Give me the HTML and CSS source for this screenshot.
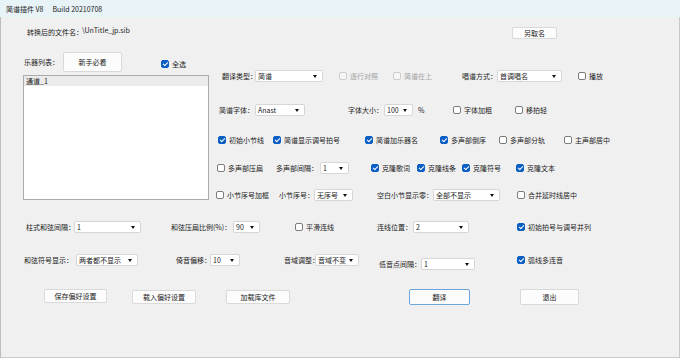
FILE: index.html
```html
<!DOCTYPE html>
<html lang="zh-CN">
<head>
    <meta charset="UTF-8">
    <meta name="viewport" content="width=device-width, initial-scale=1.0">
    <title>简谱插件 V8</title>
    <link rel="stylesheet" href="styles.css">
</head>
<body>
<div class="window">
    <div class="titlebar">
        <span>简谱插件 V8</span>
        <span class="build">Build 20210708</span>
    </div>

    <div class="client">
        <div class="file-row">
            <span class="file-label">转换后的文件名：</span>
            <span class="file-path">\UnTitle_jp.sib</span>
            <button class="btn btn-rename">另取名</button>
        </div>

        <div class="main">
            <div class="instruments">
                <div class="inst-head">
                    <span class="inst-label">乐器列表：</span>
                    <button class="btn btn-guide">新手必看</button>
                    <label class="check on select-all"><span class="box"></span>全选</label>
                </div>
                <ul class="inst-list">
                    <li class="active">通道_1</li>
                </ul>
            </div>

            <div class="options">
                <div class="opt-row r1">
                    <div class="cell"><span class="lbl w-33">翻译类型：</span><span class="combo w-68">简谱</span></div>
                    <label class="check disabled"><span class="box"></span>逐行对照</label>
                    <label class="check disabled"><span class="box"></span>简谱在上</label>
                    <div class="cell"><span class="lbl w-35">唱谱方式：</span><span class="combo w-65">首调唱名</span></div>
                    <label class="check"><span class="box"></span>播放</label>
                </div>

                <div class="opt-row r2">
                    <div class="cell"><span class="lbl w-36">简谱字体：</span><span class="combo w-50">Anast</span></div>
                    <div class="cell"><span class="lbl w-36">字体大小：</span><span class="combo w-29">100</span><span class="unit">%</span></div>
                    <label class="check"><span class="box"></span>字体加粗</label>
                    <label class="check"><span class="box"></span>移拍轻</label>
                </div>

                <div class="opt-row r3">
                    <label class="check on"><span class="box"></span>初始小节线</label>
                    <label class="check on"><span class="box"></span>简谱显示调号拍号</label>
                    <label class="check on"><span class="box"></span>简谱加乐器名</label>
                    <label class="check on"><span class="box"></span>多声部倒序</label>
                    <label class="check"><span class="box"></span>多声部分轨</label>
                    <label class="check"><span class="box"></span>主声部居中</label>
                </div>

                <div class="opt-row r4">
                    <label class="check"><span class="box"></span>多声部压扁</label>
                    <div class="cell"><span class="lbl w-44">多声部间隔：</span><span class="combo w-29">1</span></div>
                    <label class="check on"><span class="box"></span>克隆歌词</label>
                    <label class="check on"><span class="box"></span>克隆线条</label>
                    <label class="check on"><span class="box"></span>克隆符号</label>
                    <label class="check on"><span class="box"></span>克隆文本</label>
                </div>

                <div class="opt-row r5">
                    <label class="check"><span class="box"></span>小节序号加框</label>
                    <div class="cell"><span class="lbl w-35">小节序号：</span><span class="combo w-39">无序号</span></div>
                    <div class="cell"><span class="lbl w-56">空白小节显示零：</span><span class="combo w-67">全部不显示</span></div>
                    <label class="check"><span class="box"></span>合并延时线居中</label>
                </div>
            </div>
        </div>

        <div class="opt-row r6">
            <div class="cell"><span class="lbl w-48">柱式和弦间隔：</span><span class="combo w-67">1</span></div>
            <div class="cell"><span class="lbl w-62">和弦压扁比例(%)：</span><span class="combo w-27">90</span></div>
            <label class="check"><span class="box"></span>平滑连线</label>
            <div class="cell"><span class="lbl w-36">连线位置：</span><span class="combo w-56">2</span></div>
            <label class="check on"><span class="box"></span>初始拍号与调号并列</label>
        </div>

        <div class="opt-row r7">
            <div class="cell"><span class="lbl w-52">和弦符号显示：</span><span class="combo w-62">两者都不显示</span></div>
            <div class="cell"><span class="lbl w-34">倚音偏移：</span><span class="combo w-30">10</span></div>
            <div class="cell"><span class="lbl w-31">音域调整：</span><span class="combo w-44">音域不变</span></div>
            <div class="cell cell-low"><span class="lbl w-42">低音点间隔：</span><span class="combo w-54">1</span></div>
            <label class="check on"><span class="box"></span>弧线多连音</label>
        </div>

        <div class="actions">
            <button class="btn btn-save">保存偏好设置</button>
            <button class="btn btn-load">载入偏好设置</button>
            <button class="btn btn-lib">加载库文件</button>
            <button class="btn btn-run">翻译</button>
            <button class="btn btn-exit">退出</button>
        </div>
    </div>
</div>
</body>
</html>
```

FILE: styles.css
```css
:root {
    --window-bg: #f0f0f0;
    --title-bg: #e8f3f7;
    --text-color: #1c1c1c;
    --border-color: #d6d6d6;
    --check-blue: #0b5fc4;
    --white: #fff;
}

* {
    margin: 0;
    padding: 0;
    box-sizing: border-box;
}

body {
    width: 680px;
    height: 358px;
    overflow: hidden;
    background-color: var(--window-bg);
    font-family: "Noto Sans CJK SC", "Noto Sans", sans-serif;
    font-size: 7px;
    line-height: 10px;
    color: var(--text-color);
}

.window {
    width: 680px;
    height: 358px;
    display: flex;
    flex-direction: column;
}

.titlebar {
    height: 17px;
    display: flex;
    align-items: center;
    padding-left: 6px;
    background-color: var(--title-bg);
    color: #222;
}

.titlebar .build {
    margin-left: 9px;
}

.client {
    flex: 1;
    box-shadow: inset 1px 0 0 #bdbdbd, inset -1px 0 0 #c9c9c9, inset 0 -1px 0 #c9c9c9;
}

/* Buttons */
.btn {
    display: flex;
    align-items: center;
    justify-content: center;
    flex-shrink: 0;
    height: 14px;
    background-color: #fcfcfc;
    border: 1px solid #d9d9d9;
    border-radius: 2px;
    font: inherit;
    color: #222;
}

/* File name row */
.file-row {
    height: 35px;
    display: flex;
    align-items: flex-start;
    padding-left: 27px;
}

.file-label {
    width: 55px;
    margin-top: 10px;
    white-space: nowrap;
}

.file-path {
    flex: 1;
    margin-top: 8px;
}

.btn-rename {
    width: 45px;
    height: 12px;
    margin-top: 10px;
    margin-right: 123px;
}

/* Instrument list + options */
.main {
    height: 151px;
    display: flex;
}

.instruments {
    width: 209px;
    padding-left: 23px;
    flex-shrink: 0;
}

.inst-head {
    height: 20px;
    display: flex;
    align-items: center;
}

.inst-label {
    width: 40px;
    padding-left: 1px;
    white-space: nowrap;
}

.btn-guide {
    width: 59px;
    height: 20px;
}

.select-all {
    margin-left: 39px;
    margin-top: 4px;
}

.inst-list {
    list-style: none;
    width: 186px;
    height: 125px;
    margin-top: 3px;
    background-color: var(--white);
    border: 1px solid #ababab;
}

.inst-list li {
    height: 10px;
    padding-left: 2px;
}

.inst-list li.active {
    background-color: #ebebeb;
}

.options {
    flex: 1;
    display: flex;
    flex-direction: column;
}

.opt-row {
    height: 16px;
    display: grid;
    align-items: center;
}

.r1 { margin-top: 16px; padding-left: 13px; grid-template-columns: 117px 54px 69px 116px auto; }
.r2 { margin-top: 18px; padding-left: 10px; grid-template-columns: 129px 105px 62px auto; }
.r3 { margin-top: 14px; padding-left: 9px; grid-template-columns: 55px 92px 75px 59px 65px auto; }
.r4 { margin-top: 12px; padding-left: 8px; grid-template-columns: 59px 95px 46px 45px 54px auto; }
.r5 { margin-top: 11px; padding-left: 7px; grid-template-columns: 63px 98px 140px auto; }
.r6 { margin-top: 16px; padding-left: 26px; grid-template-columns: 145px 124px 82px 140px auto; }
.r7 { margin-top: 15px; padding-left: 24px; grid-template-columns: 152px 108px 95px 138px auto; }

.cell {
    display: flex;
    align-items: center;
    white-space: nowrap;
}

.cell-low {
    margin-top: 8px;
}

.lbl {
    flex-shrink: 0;
    white-space: nowrap;
}

.unit {
    margin-left: 5px;
}

/* Combo boxes */
.combo {
    position: relative;
    flex-shrink: 0;
    height: 12px;
    padding-left: 2px;
    background-color: var(--white);
    border: 1px solid var(--border-color);
    border-radius: 2px;
    white-space: nowrap;
}

.combo::after {
    content: "";
    position: absolute;
    right: 5px;
    top: 4px;
    border-left: 2px solid transparent;
    border-right: 2px solid transparent;
    border-top: 3px solid #111;
}

/* Checkboxes */
.check {
    display: flex;
    align-items: center;
    gap: 3px;
    white-space: nowrap;
}

.box {
    position: relative;
    flex-shrink: 0;
    width: 8px;
    height: 8px;
    background-color: var(--white);
    border: 1px solid #7c7c7c;
    border-radius: 2px;
}

.check.on .box {
    background-color: var(--check-blue);
    border-color: var(--check-blue);
}

.check.on .box::after {
    content: "";
    position: absolute;
    left: 2px;
    top: 0;
    width: 2px;
    height: 4px;
    border: solid var(--white);
    border-width: 0 1px 1px 0;
    transform: rotate(45deg);
}

.check.disabled {
    color: #a3a3a3;
}

.check.disabled .box {
    background-color: #f6f6f6;
    border-color: #cdcdcd;
}

/* Bottom buttons */
.actions {
    height: 16px;
    display: flex;
    align-items: flex-start;
    margin-top: 23px;
    padding-left: 44px;
}

.btn-save { width: 63px; }
.btn-load { width: 64px; margin-left: 25px; margin-top: 1px; }
.btn-lib { width: 64px; margin-left: 30px; margin-top: 1px; }
.btn-run { width: 61px; height: 16px; margin-left: 119px; border-color: #6aa6de; }
.btn-exit { width: 59px; height: 16px; margin-left: 50px; }

/* Fixed widths for labels and combo boxes */
.w-27 { width: 27px; }
.w-29 { width: 29px; }
.w-30 { width: 30px; }
.w-31 { width: 31px; }
.w-33 { width: 33px; }
.w-34 { width: 34px; }
.w-35 { width: 35px; }
.w-36 { width: 36px; }
.w-39 { width: 39px; }
.w-42 { width: 42px; }
.w-44 { width: 44px; }
.w-48 { width: 48px; }
.w-50 { width: 50px; }
.w-52 { width: 52px; }
.w-54 { width: 54px; }
.w-56 { width: 56px; }
.w-62 { width: 62px; }
.w-65 { width: 65px; }
.w-67 { width: 67px; }
.w-68 { width: 68px; }
```
